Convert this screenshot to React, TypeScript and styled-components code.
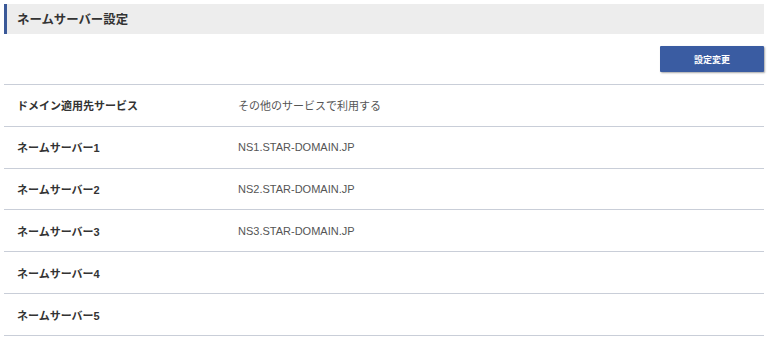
import styled, { createGlobalStyle } from 'styled-components';

const GlobalStyle = createGlobalStyle`
  body {
    margin: 0;
    background: #fff;
    font-family: "Liberation Sans", "Noto Sans CJK JP", sans-serif;
  }
`;

const Page = styled.div`
  padding: 4px;
`;

const SectionTitle = styled.h2`
  margin: 0;
  height: 30px;
  display: flex;
  align-items: center;
  padding-left: 10px;
  background: #ededed;
  border-left: 3px solid #3b5998;
  font-size: 12.4px;
  font-weight: bold;
  color: #333;
`;

const Actions = styled.div`
  display: flex;
  justify-content: flex-end;
  padding: 12px 0;
`;

const Button = styled.button`
  width: 104px;
  height: 26px;
  border: none;
  border-radius: 1px;
  background: #3a5ca2;
  color: #fff;
  font-family: inherit;
  font-size: 9px;
  font-weight: bold;
  box-shadow: 1px 1px 2px rgba(0, 0, 0, 0.35);
  cursor: pointer;
`;

const Table = styled.div`
  border-top: 1px solid #c9ced8;
`;

const Row = styled.div`
  display: grid;
  grid-template-columns: 221px 1fr;
  align-items: center;
  height: 40.83px;
  border-bottom: 1px solid #c9ced8;
  padding-left: 13px;
  font-size: 11px;
`;

const Label = styled.div`
  font-weight: bold;
  color: #333;
`;

const Value = styled.div`
  color: #555;
`;

const rows = [
  { label: 'ドメイン適用先サービス', value: 'その他のサービスで利用する' },
  { label: 'ネームサーバー1', value: 'NS1.STAR-DOMAIN.JP' },
  { label: 'ネームサーバー2', value: 'NS2.STAR-DOMAIN.JP' },
  { label: 'ネームサーバー3', value: 'NS3.STAR-DOMAIN.JP' },
  { label: 'ネームサーバー4', value: '' },
  { label: 'ネームサーバー5', value: '' },
];

const App = () => {
  return (
    <Page>
      <GlobalStyle />
      <SectionTitle>ネームサーバー設定</SectionTitle>
      <Actions>
        <Button>設定変更</Button>
      </Actions>
      <Table>
        {rows.map((r) => (
          <Row key={r.label}>
            <Label>{r.label}</Label>
            <Value>{r.value}</Value>
          </Row>
        ))}
      </Table>
    </Page>
  );
};

export default App;
